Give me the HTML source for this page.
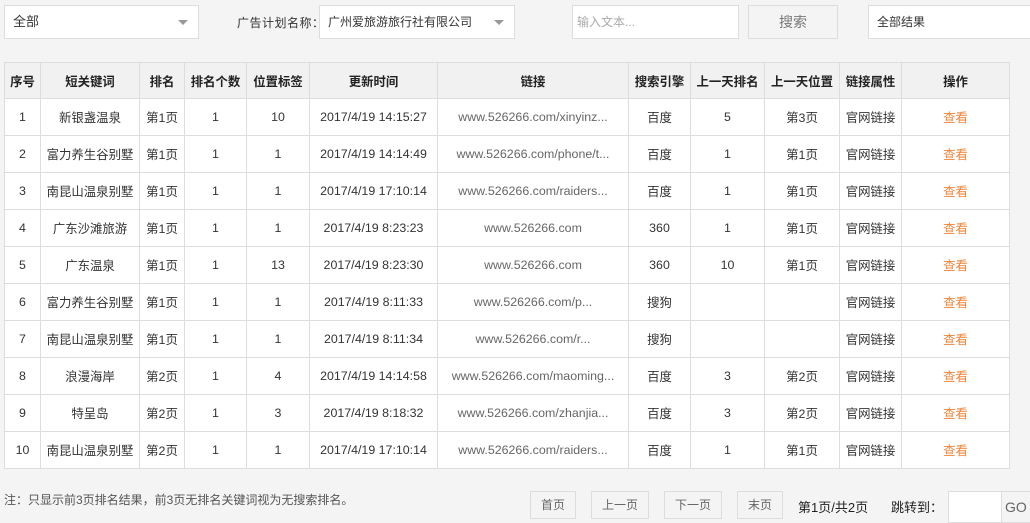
<!DOCTYPE html>
<html><head><meta charset="utf-8"><style>
*{box-sizing:border-box;margin:0;padding:0}
body{width:1030px;height:523px;background:#f4f4f4;font-family:"Liberation Sans","Noto Sans CJK SC",sans-serif;font-size:12px;color:#333;position:relative;overflow:hidden}
.box{position:absolute;background:#fff;border:1px solid #ddd;height:34px;line-height:32px;padding-left:8px;font-size:13px}
.arrow{position:absolute;right:10px;top:14px;width:0;height:0;border-left:5px solid transparent;border-right:5px solid transparent;border-top:5px solid #999}
table{position:absolute;left:4px;top:62px;border-collapse:collapse;table-layout:fixed;width:1006px;background:#fff}
td,th{border:1px solid #ddd;text-align:center;height:37px;font-size:12.4px;white-space:nowrap;overflow:hidden}
th{background:#f1f1f1;font-weight:bold;color:#222;height:36px}
td.l{color:#666}
td.o{color:#f0843a}
.btn{position:absolute;top:491px;height:28px;line-height:26px;border:1px solid #ddd;background:#f4f4f4;color:#666;text-align:center;font-size:12px}
</style></head><body>
<div class="box" style="left:4px;top:5px;width:195px">全部<span class="arrow"></span></div>
<div style="position:absolute;left:237px;top:14px;font-size:12px;letter-spacing:0.5px">广告计划名称：</div>
<div class="box" style="left:319px;top:5px;width:196px;font-size:12px">广州爱旅游旅行社有限公司<span class="arrow"></span></div>
<div class="box" style="left:572px;top:5px;width:167px;color:#aaa;padding-left:4px;font-size:12px">输入文本...</div>
<div class="box" style="left:748px;top:5px;width:90px;background:#f4f4f4;color:#777;text-align:center;padding:0;font-size:14px">搜索</div>
<div class="box" style="left:868px;top:5px;width:170px;font-size:12px">全部结果</div>
<table>
<colgroup><col style="width:36px"><col style="width:99px"><col style="width:45px"><col style="width:62px"><col style="width:63px"><col style="width:128px"><col style="width:191px"><col style="width:62px"><col style="width:74px"><col style="width:75px"><col style="width:62px"><col style="width:108px"></colgroup>
<tr><th>序号</th><th>短关键词</th><th>排名</th><th>排名个数</th><th>位置标签</th><th>更新时间</th><th>链接</th><th>搜索引擎</th><th>上一天排名</th><th>上一天位置</th><th>链接属性</th><th>操作</th></tr>
<tr><td>1</td><td>新银盏温泉</td><td>第1页</td><td>1</td><td>10</td><td>2017/4/19 14:15:27</td><td class="l">www.526266.com/xinyinz...</td><td>百度</td><td>5</td><td>第3页</td><td>官网链接</td><td class="o">查看</td></tr>
<tr><td>2</td><td>富力养生谷别墅</td><td>第1页</td><td>1</td><td>1</td><td>2017/4/19 14:14:49</td><td class="l">www.526266.com/phone/t...</td><td>百度</td><td>1</td><td>第1页</td><td>官网链接</td><td class="o">查看</td></tr>
<tr><td>3</td><td>南昆山温泉别墅</td><td>第1页</td><td>1</td><td>1</td><td>2017/4/19 17:10:14</td><td class="l">www.526266.com/raiders...</td><td>百度</td><td>1</td><td>第1页</td><td>官网链接</td><td class="o">查看</td></tr>
<tr><td>4</td><td>广东沙滩旅游</td><td>第1页</td><td>1</td><td>1</td><td>2017/4/19 8:23:23</td><td class="l">www.526266.com</td><td>360</td><td>1</td><td>第1页</td><td>官网链接</td><td class="o">查看</td></tr>
<tr><td>5</td><td>广东温泉</td><td>第1页</td><td>1</td><td>13</td><td>2017/4/19 8:23:30</td><td class="l">www.526266.com</td><td>360</td><td>10</td><td>第1页</td><td>官网链接</td><td class="o">查看</td></tr>
<tr><td>6</td><td>富力养生谷别墅</td><td>第1页</td><td>1</td><td>1</td><td>2017/4/19 8:11:33</td><td class="l">www.526266.com/p...</td><td>搜狗</td><td></td><td></td><td>官网链接</td><td class="o">查看</td></tr>
<tr><td>7</td><td>南昆山温泉别墅</td><td>第1页</td><td>1</td><td>1</td><td>2017/4/19 8:11:34</td><td class="l">www.526266.com/r...</td><td>搜狗</td><td></td><td></td><td>官网链接</td><td class="o">查看</td></tr>
<tr><td>8</td><td>浪漫海岸</td><td>第2页</td><td>1</td><td>4</td><td>2017/4/19 14:14:58</td><td class="l">www.526266.com/maoming...</td><td>百度</td><td>3</td><td>第2页</td><td>官网链接</td><td class="o">查看</td></tr>
<tr><td>9</td><td>特呈岛</td><td>第2页</td><td>1</td><td>3</td><td>2017/4/19 8:18:32</td><td class="l">www.526266.com/zhanjia...</td><td>百度</td><td>3</td><td>第2页</td><td>官网链接</td><td class="o">查看</td></tr>
<tr><td>10</td><td>南昆山温泉别墅</td><td>第2页</td><td>1</td><td>1</td><td>2017/4/19 17:10:14</td><td class="l">www.526266.com/raiders...</td><td>百度</td><td>1</td><td>第1页</td><td>官网链接</td><td class="o">查看</td></tr>
</table>
<div style="position:absolute;left:4px;top:491px;font-size:12px;color:#555">注：只显示前3页排名结果，前3页无排名关键词视为无搜索排名。</div>
<div class="btn" style="left:530px;width:46px">首页</div>
<div class="btn" style="left:591px;width:58px">上一页</div>
<div class="btn" style="left:664px;width:58px">下一页</div>
<div class="btn" style="left:737px;width:46px">末页</div>
<div style="position:absolute;left:798px;top:497px;font-size:13px;color:#222">第1页/共2页</div>
<div style="position:absolute;left:891px;top:497px;font-size:13px;color:#222">跳转到：</div>
<div style="position:absolute;left:948px;top:491px;width:54px;height:32px;background:#fff;border:1px solid #ddd"></div>
<div style="position:absolute;left:1001px;top:491px;width:40px;height:32px;background:#f4f4f4;border:1px solid #ddd;line-height:30px;padding-left:3px;font-size:14px;color:#666">GO</div>
</body></html>
